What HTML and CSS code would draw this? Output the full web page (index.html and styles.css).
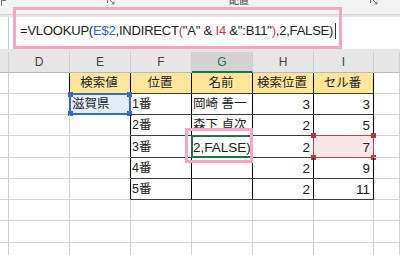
FILE: index.html
```html
<!DOCTYPE html>
<html lang="ja">
<head>
<meta charset="utf-8">
<link rel="stylesheet" href="styles.css">
</head>
<body>
<div class="ribbon">
  <span class="corner"></span>
  <span class="launch l1"><svg width="8" height="8" viewBox="0 0 8 8"><path d="M0.5 6V0.5H6" fill="none" stroke="#777" stroke-width="1"/><path d="M3 3L7 7M7 4.5V7H4.5" fill="none" stroke="#777" stroke-width="1"/></svg></span>
  <span class="label">配置</span>
  <span class="launch l2"><svg width="8" height="8" viewBox="0 0 8 8"><path d="M0.5 6V0.5H6" fill="none" stroke="#777" stroke-width="1"/><path d="M3 3L7 7M7 4.5V7H4.5" fill="none" stroke="#777" stroke-width="1"/></svg></span>
</div>
<div class="fbar">
  <div class="namebox"></div>
  <div class="formula">=VLOOKUP(<span class="ref-blue">E$2</span>,INDIRECT<span class="paren">(</span>"A" &amp; <span class="ref-red">I4</span> &amp;":B11"<span class="paren">)</span>,2,FALSE)<span class="caret"></span></div>
</div>
<div class="sheet">
  <!-- header row -->
  <div class="c h"></div><div class="c h">D</div><div class="c h">E</div><div class="c h">F</div><div class="c h hsel">G</div><div class="c h">H</div><div class="c h">I</div><div class="c h"></div>
  <!-- row 2 -->
  <div class="c rh"></div><div class="c br"></div><div class="c t y jp ctr">検索値</div><div class="c t y jp ctr">位置</div><div class="c t y jp ctr">名前</div><div class="c t y jp ctr">検索位置</div><div class="c t y jp ctr">セル番</div><div class="c"></div>
  <!-- row 3 -->
  <div class="c rh"></div><div class="c"></div><div class="c br jp blue-cell"><span class="sel blue"><i class="hd tl"></i><i class="hd tr"></i><i class="hd bl"></i><i class="hd br2"></i></span>滋賀県</div><div class="c t jp">1番</div><div class="c t jp">岡崎 善一</div><div class="c t num">3</div><div class="c t num">3</div><div class="c"></div>
  <!-- row 4 -->
  <div class="c rh"></div><div class="c"></div><div class="c br"></div><div class="c t jp">2番</div><div class="c t jp">森下 貞次</div><div class="c t num">2</div><div class="c t num">5</div><div class="c"></div>
  <!-- row 5 -->
  <div class="c rh"></div><div class="c"></div><div class="c br"></div><div class="c t jp">3番</div><div class="c t edit"><span class="green"></span>2,FALSE)</div><div class="c t num">2</div><div class="c t num red-cell"><span class="sel red"><i class="hd tl"></i><i class="hd tr"></i><i class="hd bl"></i><i class="hd br2"></i></span>7</div><div class="c"></div>
  <!-- row 6 -->
  <div class="c rh"></div><div class="c"></div><div class="c br"></div><div class="c t jp">4番</div><div class="c t"></div><div class="c t num">2</div><div class="c t num">9</div><div class="c"></div>
  <!-- row 7 -->
  <div class="c rh"></div><div class="c"></div><div class="c br"></div><div class="c t jp">5番</div><div class="c t"></div><div class="c t num">2</div><div class="c t num">11</div><div class="c"></div>
  <!-- rows 8-10 -->
  <div class="c rh"></div><div class="c"></div><div class="c"></div><div class="c"></div><div class="c"></div><div class="c"></div><div class="c"></div><div class="c"></div>
  <div class="c rh"></div><div class="c"></div><div class="c"></div><div class="c"></div><div class="c"></div><div class="c"></div><div class="c"></div><div class="c"></div>
  <div class="c rh"></div><div class="c"></div><div class="c"></div><div class="c"></div><div class="c"></div><div class="c"></div><div class="c"></div><div class="c"></div>
</div>
<div class="hl hl-formula"></div>
<div class="hl hl-cell"></div>
</body>
</html>
```

FILE: styles.css
```css
* { box-sizing: border-box; }
html, body { margin: 0; padding: 0; }
body {
  width: 400px;
  height: 255px;
  overflow: hidden;
  position: relative;
  background: #e6e6e6;
  font-family: "Liberation Sans", "Noto Sans CJK JP", sans-serif;
  color: #222;
}

/* ribbon strip */
.ribbon {
  height: 15px;
  background: #f3f3f3;
  border-bottom: 1px solid #d5d5d5;
  display: flex;
  align-items: flex-start;
  overflow: hidden;
}
.corner {
  width: 5px;
  height: 6px;
  margin-left: 1px;
  border-left: 1px solid #777;
  border-top: 1px solid #777;
}
.launch { display: block; margin-top: -3px; height: 9px; }
.launch svg { display: block; }
.l1 { margin-left: 101px; }
.l2 { margin-left: 121px; }
.label {
  margin-left: 114px;
  font-family: "Noto Sans CJK JP", sans-serif;
  font-size: 10px;
  line-height: 10px;
  margin-top: -5px;
  color: #444;
}

/* formula bar */
.fbar {
  height: 32px;
  margin-top: 2px;
  display: flex;
  background: #fff;
}
.namebox {
  width: 9px;
  border-right: 1px solid #c8c8c8;
}
.formula {
  padding-left: 11px;
  padding-top: 6px;
  font-size: 13px;
  line-height: 16px;
  letter-spacing: -0.2px;
  white-space: nowrap;
  color: #222;
}
.ref-blue { color: #3066c8; }
.ref-red { color: #cc3a55; }
.paren { color: #c03a66; }
.caret {
  display: inline-block;
  width: 1px;
  height: 16px;
  background: #333;
  margin-left: 2px;
  vertical-align: -4px;
}

/* sheet grid */
.sheet {
  margin-top: 3px;
  display: grid;
  grid-template-columns: 9px 61px 61px 61px 61px 61px 60px 1fr;
  grid-template-rows: 21px 21px 21px 21px 22px 21px 21px 21px 22px 21px;
  background: #fff;
}
.c {
  position: relative;
  border-right: 1px solid #d4d4d4;
  border-bottom: 1px solid #d4d4d4;
  display: flex;
  align-items: flex-end;
  padding: 0 3px 1px 3px;
  white-space: nowrap;
  overflow: visible;
  font-size: 13.5px;
  line-height: 17px;
}
.h {
  background: #e6e6e6;
  border-right: 1px solid #cfcfcf;
  border-bottom: 1px solid #b8b8b8;
  justify-content: center;
  align-items: center;
  font-size: 12px;
  color: #444;
  padding: 0;
  line-height: 20px;
}
.hsel {
  background: #d3d3d3;
  color: #217346;
  border-bottom: 2px solid #217346;
}
.rh { border-right: 1px solid #cfcfcf; }
.t {
  border-right: 1px solid #000;
  border-bottom: 1px solid #3c3c3c;
}
.br { border-right: 1px solid #000; }
.y { background: #ffe699; }
.jp {
  font-family: "Liberation Sans", "Noto Sans CJK JP", sans-serif;
  font-size: 12.5px;
  line-height: 17px;
  padding-left: 1px;
}
.ctr { justify-content: center; }
.num { justify-content: flex-end; padding-right: 3px; }

.blue-cell { background: #e4ecf7; padding-left: 2px; }
.red-cell { background: #fbe5e6; }

.sel {
  position: absolute;
  top: -1px;
  left: -1px;
  right: -1px;
  bottom: -1px;
  border: 2px solid #3a6bc0;
  pointer-events: none;
}
.sel.red { border: 1px solid #c0404e; }
.hd {
  position: absolute;
  width: 5px;
  height: 5px;
  background: #3a6bc0;
}
.red .hd { background: #b83344; }
.hd.tl { left: -3px; top: -3px; }
.hd.tr { right: -3px; top: -3px; }
.hd.bl { left: -3px; bottom: -3px; }
.hd.br2 { right: -3px; bottom: -3px; }

.edit { padding-left: 1px; }
.green {
  position: absolute;
  left: -1px;
  top: -1px;
  right: -1px;
  bottom: -1px;
  border: 2px solid #217346;
}

/* pink annotation boxes */
.hl {
  position: absolute;
  border: 3px solid #f4a6c4;
}
.hl-formula { left: 13px; top: 7px; width: 329px; height: 42px; }
.hl-cell { left: 185px; top: 128px; width: 68px; height: 35px; }
```
